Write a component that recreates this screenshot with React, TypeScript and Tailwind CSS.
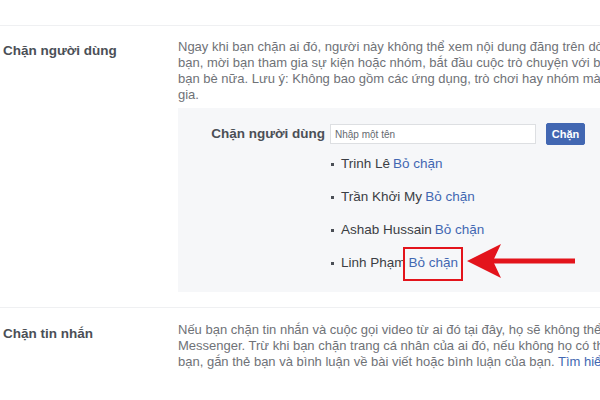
import React from 'react';

const blocked = ['Trinh Lê', 'Trần Khởi My', 'Ashab Hussain', 'Linh Phạm'];

function Arrow() {
  return (
    <svg
      className="absolute left-[58px] top-[-9px]"
      width="108"
      height="34"
      viewBox="0 0 108 34"
    >
      <rect x="26" y="14.5" width="82" height="5" fill="#e3141c" />
      <path d="M0 17 L34 0 L26 17 L34 34 Z" fill="#e3141c" />
    </svg>
  );
}

function BlockedItem({ name, last }: { name: string; last: boolean }) {
  return (
    <li className="flex items-center h-[18px]">
      <span className="w-[3px] h-[3px] bg-[#4b4f56] mr-[7px]" />
      <span className="text-[#3b3e44]">{name}</span>
      <span className="relative ml-[3px]">
        <a className="text-[#4267b2] cursor-pointer">Bỏ chặn</a>
        {last && (
          <>
            <span className="absolute left-[-6px] right-[-5px] top-[-6px] bottom-[-8px] border-2 border-[#e3141c]" />
            <Arrow />
          </>
        )}
      </span>
    </li>
  );
}

export default function App() {
  return (
    <div
      className="relative w-[600px] h-[400px] overflow-hidden bg-white"
      style={{ fontFamily: '"Liberation Sans", Arial, sans-serif' }}
    >
      <div className="h-[25px]" />
      <div className="border-t border-[#eff0f2] flex pt-[13px]">
        <div className="w-[178px] shrink-0 pl-[3px] pt-[2px] text-[13.5px] font-bold text-[#4b4f56]">
          Chặn người dùng
        </div>
        <div className="w-[800px] shrink-0">
          <div className="text-[13px] leading-[16px] text-[#6f7277] whitespace-nowrap">
            <div>Ngay khi bạn chặn ai đó, người này không thể xem nội dung đăng trên dòng thời gian của bạn, gắn thẻ</div>
            <div>bạn, mời bạn tham gia sự kiện hoặc nhóm, bắt đầu cuộc trò chuyện với bạn hoặc thêm bạn làm</div>
            <div>bạn bè nữa. Lưu ý: Không bao gồm các ứng dụng, trò chơi hay nhóm mà cả bạn và người này cùng tham</div>
            <div>gia.</div>
          </div>
          <div className="mt-[5px] bg-[#f6f7f9] pt-[15px] pb-[21px] h-[184px]">
            <div className="flex items-center">
              <div className="w-[152px] pr-[5px] text-right text-[13.5px] font-bold text-[#4b4f56]">
                Chặn người dùng
              </div>
              <div className="w-[206px] h-[20px] bg-white border border-[#dddfe2] flex items-center px-[4px] text-[10px] text-[#666a70]">
                Nhập một tên
              </div>
              <button className="ml-[10px] w-[39px] h-[22px] rounded-[2px] bg-[#4267b2] border border-[#4267b2] text-white text-[11px] font-bold">
                Chặn
              </button>
            </div>
            <ul className="ml-[153px] mt-[10px] flex flex-col gap-[15px] text-[13.5px]">
              {blocked.map((n, i) => (
                <BlockedItem key={n} name={n} last={i === blocked.length - 1} />
              ))}
            </ul>
          </div>
        </div>
      </div>
      <div className="mt-[15px] border-t border-[#eff0f2] flex pt-[14px]">
        <div className="w-[178px] shrink-0 pl-[3px] pt-[2px] text-[13.5px] font-bold text-[#4b4f56]">
          Chặn tin nhắn
        </div>
        <div className="w-[800px] shrink-0 text-[13px] leading-[16px] text-[#6f7277] whitespace-nowrap">
          <div>Nếu bạn chặn tin nhắn và cuộc gọi video từ ai đó tại đây, họ sẽ không thể liên hệ với bạn trong ứng dụng</div>
          <div>Messenger. Trừ khi bạn chặn trang cá nhân của ai đó, nếu không họ có thể đăng lên dòng thời gian của</div>
          <div>
            bạn, gắn thẻ bạn và bình luận về bài viết hoặc bình luận của bạn.{' '}
            <a className="text-[#4267b2]">Tìm hiểu thêm</a>
          </div>
        </div>
      </div>
    </div>
  );
}
